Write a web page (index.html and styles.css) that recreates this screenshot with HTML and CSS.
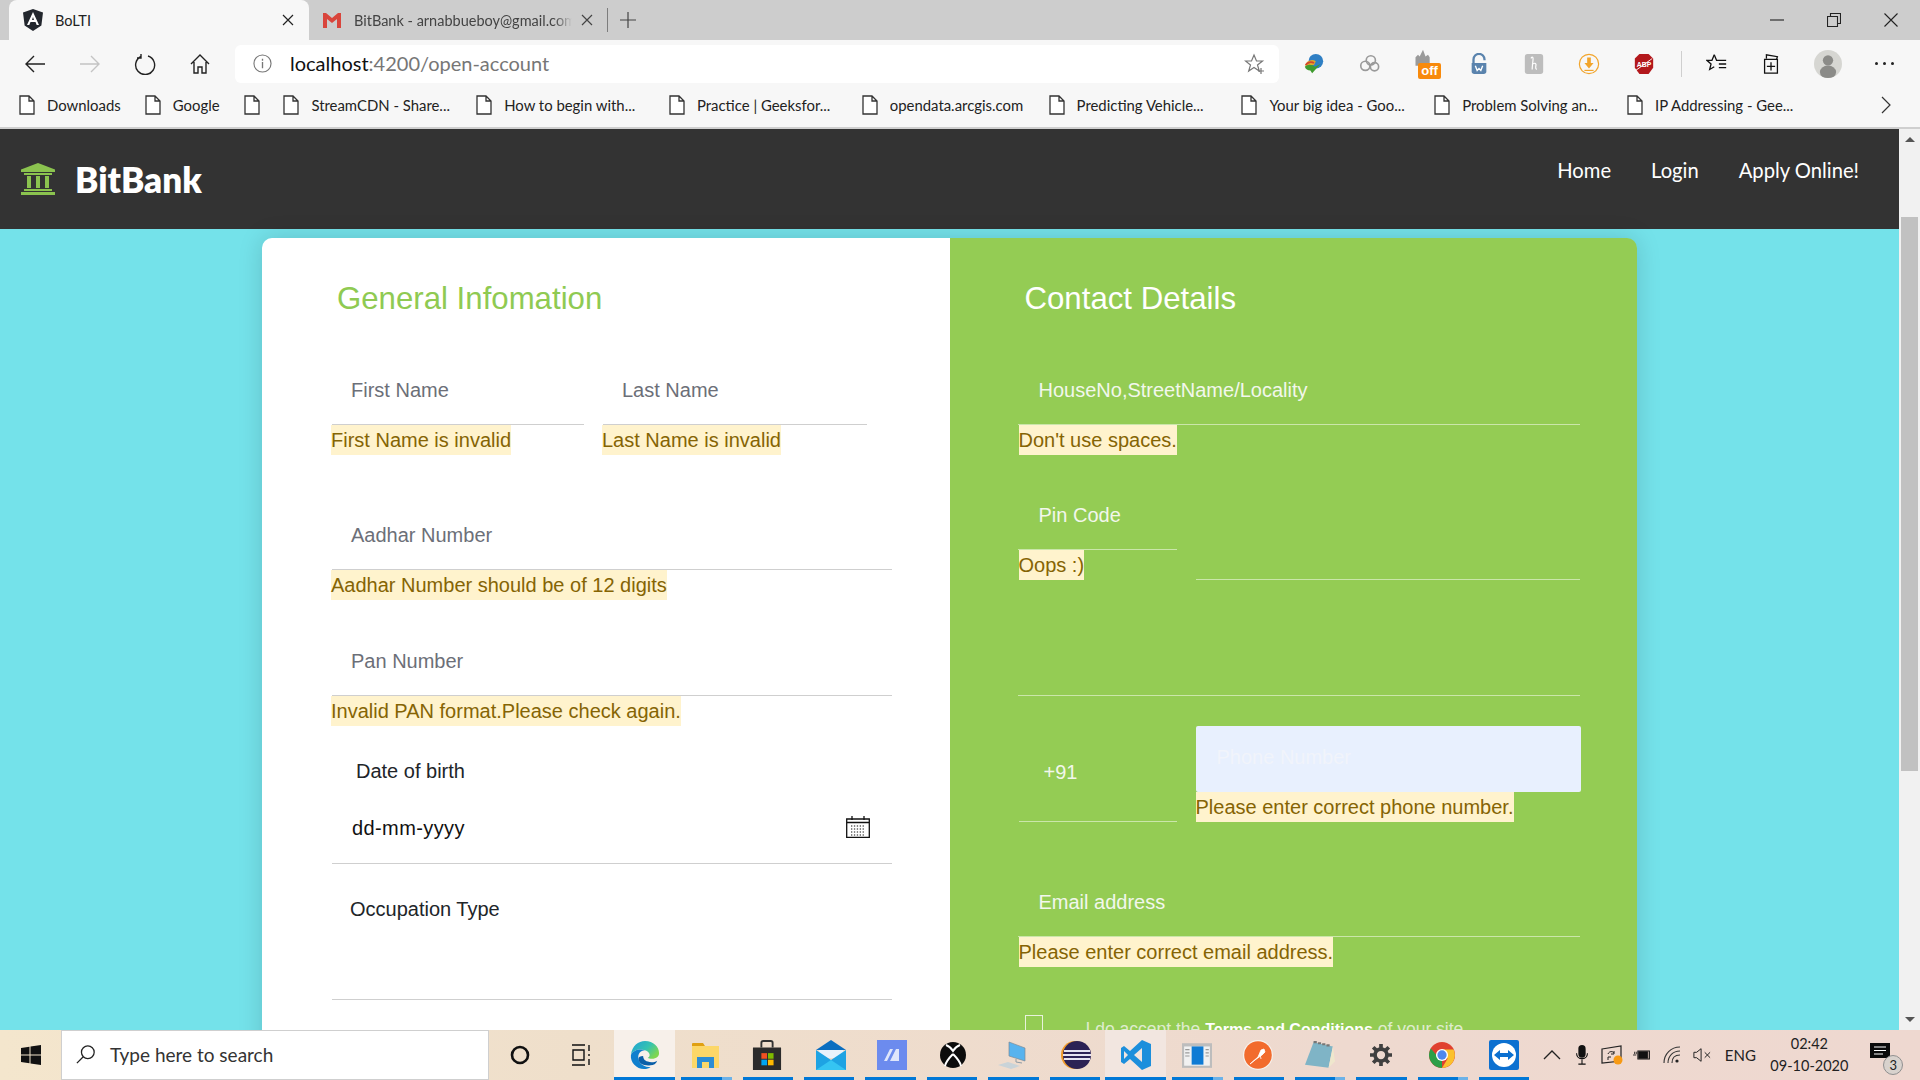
FILE: index.html
```html
<!DOCTYPE html>
<html lang="en">
<head>
<meta charset="utf-8">
<title>BoLTI</title>
<link rel="stylesheet" href="styles.css">
</head>
<body>
<svg class="defs" width="0" height="0" aria-hidden="true">
  <symbol id="doc" viewBox="0 0 16 20"><path d="M1 1h9l5 5v13H1z M10 1v5h5" fill="#fff" stroke="#333" stroke-width="1.3"/></symbol>
  <symbol id="close" viewBox="0 0 12 12"><path d="M1 1l10 10M11 1L1 11" fill="none" stroke="currentColor" stroke-width="1.2"/></symbol>
</svg>
<div class="window">
  <div class="tabstrip">
    <div class="tab tab-active">
      <svg class="tab-icon" viewBox="0 0 20 22"><path d="M10 0l10 3.500-1.600 13L10 22l-8.400-5.500L0 3.500z" fill="#23272e"/><path d="M10 3l-6 13h2.300l1.200-3h5l1.200 3h2.300zM9 11l1-3 1 3z" fill="#fff"/></svg>
      <span class="tab-title">BoLTI</span>
      <svg class="tab-x" viewBox="0 0 12 12"><use href="#close"/></svg>
    </div>
    <div class="tab tab-idle">
      <svg class="tab-icon" viewBox="0 0 20 16"><path d="M1 1h3l6 5 6-5h3v15h-4V7l-5 4-5-4v9H1z" fill="#d9453c"/></svg>
      <span class="tab-title tab-clip">BitBank - arnabbueboy@gmail.com</span>
      <svg class="tab-x" viewBox="0 0 12 12"><use href="#close"/></svg>
    </div>
    <div class="tab-sep"></div>
    <svg class="tab-plus" viewBox="0 0 16 16"><path d="M8 0v16M0 8h16" stroke="#444" stroke-width="1.2"/></svg>
    <div class="win-controls">
      <svg viewBox="0 0 14 14"><path d="M0 7h14" stroke="#222" stroke-width="1.1"/></svg>
      <svg viewBox="0 0 14 14"><path d="M.5 3.500h10v10H.5zM3.500 3.500V.5h10v10h-3" fill="none" stroke="#222" stroke-width="1.1"/></svg>
      <svg viewBox="0 0 14 14"><path d="M.5.5l13 13M13.500.5l-13 13" stroke="#222" stroke-width="1.1"/></svg>
    </div>
  </div>

  <div class="toolbar">
    <div class="tool-btn"><svg viewBox="0 0 22 22"><path d="M21 11H2M10 3l-8 8 8 8" fill="none" stroke="#222" stroke-width="1.400"/></svg></div>
    <div class="tool-btn"><svg viewBox="0 0 22 22"><path d="M1 11h19M12 3l8 8-8 8" fill="none" stroke="#c4c4c4" stroke-width="1.400"/></svg></div>
    <div class="tool-btn"><svg viewBox="0 0 22 22"><path d="M7 3.500A9.500 9.500 0 1 0 14 3M7 1v4H3" fill="none" stroke="#222" stroke-width="1.400"/></svg></div>
    <div class="tool-btn"><svg viewBox="0 0 22 22"><path d="M2 11l9-9 9 9M5 9v11h4v-6h4v6h4V9" fill="none" stroke="#222" stroke-width="1.400"/></svg></div>
    <div class="address">
      <svg class="info" viewBox="0 0 20 20"><circle cx="10" cy="10" r="9" fill="none" stroke="#777" stroke-width="1.200"/><path d="M10 8.500V15M10 5v2" stroke="#777" stroke-width="1.400"/></svg>
      <span class="url"><span class="url-host">localhost</span>:4200/open-account</span>
      <svg class="fav" viewBox="0 0 22 22"><path d="M10 2l2.500 6h6l-5 4 1.800 6-5.300-3.500L4.700 18l1.800-6-5-4h6z" fill="none" stroke="#777" stroke-width="1.200"/><path d="M17 15v6M14 18h6" stroke="#777" stroke-width="1.200"/></svg>
    </div>
    <div class="ext-row">
      <svg viewBox="0 0 24 24"><circle cx="14" cy="9" r="8" fill="#2f7fc4"/><path d="M2 14c2-6 8-8 12-5l-2 4z" fill="#e0a92a"/><path d="M2 15c2-3 8-3 11 0l6-3-9 10-2-3c-3 0-5-1-6-4z" fill="#3f9b2f"/><path d="M3 13c2-3 6-4 9-2" stroke="#d2452e" stroke-width="2" fill="none"/></svg>
      <svg viewBox="0 0 24 24" fill="none" stroke="#9a9a9a" stroke-width="1.800"><circle cx="8" cy="14" r="5"/><circle cx="14" cy="8" r="5"/><circle cx="18" cy="15" r="4.500"/></svg>
      <div class="ext-off">
        <svg viewBox="0 0 24 24"><path d="M3 20V10l3-3 2 2 4-8 3 8 3-2 2 3v10z" fill="#9a9a9a"/></svg>
        <span class="off-badge">off</span>
      </div>
      <svg viewBox="0 0 24 24"><path d="M6 11V7a6 6 0 0 1 12 0v1" fill="none" stroke="#5a83ad" stroke-width="2.500"/><path d="M4 11h16v9a3 3 0 0 1-3 3H7a3 3 0 0 1-3-3z" fill="#5a83ad"/><path d="M8 14l2 5 2-2 2 2 2-5" stroke="#fff" stroke-width="1.500" fill="none"/></svg>
      <svg viewBox="0 0 24 24"><rect x="2" y="1" width="20" height="22" rx="3" fill="#bdbdbd"/><path d="M9 6c0-2 2-2 2 0 0 3-1 8-1 12M10 13c2-3 5-2 4 1 0 2-1 3 1 4" fill="none" stroke="#fff" stroke-width="1.300"/></svg>
      <svg viewBox="0 0 24 24"><circle cx="12" cy="12" r="10.500" fill="none" stroke="#f2a52c" stroke-width="1.300"/><path d="M10 5h4v6h3l-5 6-5-6h3z" fill="#f2a52c"/><path d="M7 19h10" stroke="#f2a52c" stroke-width="1.300"/></svg>
      <svg viewBox="0 0 24 24"><path d="M7 1h10l5 5v10l-5 7H7l-5-7V6z" fill="#b3181c"/><text x="12" y="15" class="abp">ABP</text><path d="M3 19L21 6" stroke="#fff" stroke-width="1"/></svg>
      <div class="tool-sep"></div>
      <div class="tool-right">
        <svg viewBox="0 0 24 24"><path d="M9 2L6.500 8H1l4.500 4L4 18l5-3" fill="none" stroke="#111" stroke-width="1.400"/><path d="M9 2l2.500 6H22M14 12h8M14 16h8" fill="none" stroke="#111" stroke-width="1.400"/></svg>
        <svg viewBox="0 0 24 24"><path d="M7 6V2l12 2-1 3M5 7h14v15H5z" fill="none" stroke="#111" stroke-width="1.400"/><path d="M12 10v9M7.500 14.500h9" stroke="#111" stroke-width="1.400"/></svg>
        <div class="avatar"><svg viewBox="0 0 28 38"><ellipse cx="14" cy="30" rx="11" ry="9" fill="#8b8b88"/><circle cx="14" cy="14" r="7" fill="#8b8b88"/></svg></div>
        <div class="more"><i></i><i></i><i></i></div>
      </div>
    </div>
  </div>

  <div class="bookmarks">
    <a class="bm"><svg><use href="#doc"/></svg><span class="bm-text w-downloads">Downloads</span></a>
    <a class="bm"><svg><use href="#doc"/></svg><span class="bm-text w-google">Google</span></a>
    <a class="bm"><svg><use href="#doc"/></svg></a>
    <a class="bm"><svg><use href="#doc"/></svg><span class="bm-text">StreamCDN - Share...</span></a>
    <a class="bm"><svg><use href="#doc"/></svg><span class="bm-text">How to begin with...</span></a>
    <a class="bm"><svg><use href="#doc"/></svg><span class="bm-text">Practice | Geeksfor...</span></a>
    <a class="bm"><svg><use href="#doc"/></svg><span class="bm-text w-open">opendata.arcgis.com</span></a>
    <a class="bm"><svg><use href="#doc"/></svg><span class="bm-text">Predicting Vehicle...</span></a>
    <a class="bm"><svg><use href="#doc"/></svg><span class="bm-text">Your big idea - Goo...</span></a>
    <a class="bm"><svg><use href="#doc"/></svg><span class="bm-text">Problem Solving an...</span></a>
    <a class="bm"><svg><use href="#doc"/></svg><span class="bm-text">IP Addressing - Gee...</span></a>
    <svg class="bm-more" viewBox="0 0 10 18"><path d="M1 1l8 8-8 8" fill="none" stroke="#333" stroke-width="1.200"/></svg>
  </div>

  <div class="viewport">
    <div class="page">
      <nav class="navbar">
        <div class="brand">
          <svg class="brand-icon" viewBox="0 0 34 32"><path d="M17 0l17 6.500V9H0V6.500z" fill="#8bc34f"/><path d="M3 10h28v2H3zM6 13h4v12H6zM15 13h4v12h-4zM24 13h4v12h-4zM3 26h28v2H3zM0 29h34v3H0z" fill="#8bc34f"/></svg>
          <span class="brand-name">BitBank</span>
        </div>
        <div class="nav-links">
          <a>Home</a>
          <a>Login</a>
          <a>Apply Online!</a>
        </div>
      </nav>

      <main class="card">
        <section class="pane pane-left">
          <h2 class="pane-title">General Infomation</h2>
          <div class="split">
            <div class="col-first">
              <div class="field">First Name</div>
              <span class="err">First Name is invalid</span>
            </div>
            <div class="col-last">
              <div class="field">Last Name</div>
              <span class="err">Last Name is invalid</span>
            </div>
          </div>
          <div class="group gap-aadhar">
            <div class="field">Aadhar Number</div>
            <span class="err">Aadhar Number should be of 12 digits</span>
          </div>
          <div class="group gap-pan">
            <div class="field">Pan Number</div>
            <span class="err">Invalid PAN format.Please check again.</span>
          </div>
          <label class="dob-label">Date of birth</label>
          <div class="field field-date">
            <span class="date-value">dd-mm-yyyy</span>
            <svg class="cal" viewBox="0 0 24 22"><path d="M.7 3h22.600v18.300H.7z" fill="#fff" stroke="#111" stroke-width="1.300"/><path d="M1 6.500h22M6 0v4M18 0v4" stroke="#111" stroke-width="1.300"/><path d="M5 10h14M5 13h14M5 16h14M5 19h14" stroke="#111" stroke-width="1.200" stroke-dasharray="1.300 1.600"/></svg>
          </div>
          <div class="field field-occupation">Occupation Type</div>
        </section>

        <section class="pane pane-right">
          <h2 class="pane-title">Contact Details</h2>
          <div class="group">
            <div class="field">HouseNo,StreetName/Locality</div>
            <span class="err">Don't use spaces.</span>
          </div>
          <div class="row-pin">
            <div class="col-short">
              <div class="field">Pin Code</div>
              <span class="err">Oops :)</span>
            </div>
            <div class="col-wide"><div class="field field-tall"></div></div>
          </div>
          <div class="field field-blank"></div>
          <div class="row-phone">
            <div class="col-short"><div class="field field-code">+91</div></div>
            <div class="col-wide">
              <div class="phone-input">Phone Number</div>
              <span class="err err-phone">Please enter correct phone number.</span>
            </div>
          </div>
          <div class="group gap-email">
            <div class="field">Email address</div>
            <span class="err">Please enter correct email address.</span>
          </div>
          <div class="terms">
            <span class="check"></span>
            <span class="terms-text">I do accept the <b>Terms and Conditions</b> of your site</span>
          </div>
        </section>
      </main>
    </div>
    <div class="scrollbar">
      <span class="arrow-up"></span>
      <div class="thumb"></div>
      <span class="arrow-down"></span>
    </div>
  </div>

  <footer class="taskbar">
    <div class="start"><svg viewBox="0 0 20 20"><path d="M0 3l8.500-1.300v7.800H0zM9.500 1.500L20 0v9.500H9.500zM0 10.500h8.500v7.800L0 17zM9.500 10.500H20V20L9.500 18.500z" fill="#111"/></svg></div>
    <div class="search">
      <svg viewBox="0 0 22 22"><circle cx="13" cy="9" r="7" fill="none" stroke="#222" stroke-width="1.400"/><path d="M8 14l-7 7" stroke="#222" stroke-width="1.400"/></svg>
      <span>Type here to search</span>
    </div>
    <div class="sys-btn"><svg viewBox="0 0 20 20"><circle cx="10" cy="10" r="8" fill="none" stroke="#111" stroke-width="2.600"/></svg></div>
    <div class="sys-btn"><svg viewBox="0 0 20 22"><path d="M1 1h13M1 21h13M2 6h11v10H2zM18 1v6M18 10v2M18 15v6" fill="none" stroke="#111" stroke-width="1.400"/></svg></div>
    <div class="apps">
      <div class="app app-active">
        <svg viewBox="0 0 32 32"><defs><linearGradient id="eg" x1="0" y1="0" x2="1" y2=".6"><stop offset="0" stop-color="#1f9fd8"/><stop offset=".6" stop-color="#35c3b0"/><stop offset="1" stop-color="#7fd650"/></linearGradient></defs><path d="M1 16C2 6 9 1 16 1c9 0 15 6 15 13 0 5-5 6-9 6-2 0-3-1-3-1 3-1 3-6-3-8C10 9 3 11 1 16z" fill="url(#eg)"/><path d="M1 16c2-5 9-7 15-5-5 0-8 4-7 9 1 6 7 9 13 9-2 1-4 2-7 2C7 31 0 24 1 16z" fill="#0f7fce"/><path d="M9 20c0 5 6 8 13 7 3 0 6-2 7-5-3 2-7 2-10 1-4-1-5-4-5-6-3 0-5 1-5 3z" fill="#0b5fa8"/></svg>
      </div>
      <div class="app app-stack">
        <svg viewBox="0 0 28 30"><path d="M0 4a1 1 0 0 1 1-1h10l2 3H0z" fill="#e0a012"/><path d="M0 6h27v22H0z" fill="#fcd768"/><path d="M5 28V17h17v11h-5v-6h-7v6z" fill="#2c8dd4"/></svg>
      </div>
      <div class="app app-run">
        <svg viewBox="0 0 30 32"><path d="M9 8V3a2 2 0 0 1 2-2h8a2 2 0 0 1 2 2v5" fill="none" stroke="#333" stroke-width="2"/><path d="M0 8h30v24H0z" fill="#2b2b2b"/><path d="M9 14h6v6H9z" fill="#f25022"/><path d="M16 14h6v6h-6z" fill="#7fba00"/><path d="M9 21h6v6H9z" fill="#00a4ef"/><path d="M16 21h6v6h-6z" fill="#ffb900"/></svg>
      </div>
      <div class="app app-run app-nudge">
        <svg viewBox="0 0 30 30"><path d="M0 10L15 0l15 10z" fill="#0a6ec0"/><path d="M3 10h24v8H3z" fill="#e8f2fb"/><path d="M0 10l15 10 15-10v20H0z" fill="#1ea3e3"/><path d="M0 30l15-10 15 10z" fill="#35c4f2"/></svg>
      </div>
      <div class="app app-run app-nudge">
        <svg viewBox="0 0 30 30"><path d="M0 0h30v30H0z" fill="#6c8bee"/><path d="M13 9l-6 12h3l6-12zM19 9l-6 12h9V9z" fill="#dfe6fb"/></svg>
      </div>
      <div class="app app-run app-mid app-nudge">
        <svg viewBox="0 0 26 26"><circle cx="13" cy="13" r="13" fill="#0c0c0c"/><path d="M6 3c3 1 5 3 7 6 2-3 4-5 7-6M13 12c-3 3-7 7-8 12M13 12c3 3 7 7 8 12" stroke="#fff" stroke-width="2" fill="none"/></svg>
      </div>
      <div class="app app-run">
        <svg viewBox="0 0 30 30"><path d="M11 2l16 6v13L11 16z" fill="#58b3ee" stroke="#7c8a96" stroke-width=".7"/><path d="M18 19v3l6 1" fill="none" stroke="#8c9aa4"/><path d="M0 25l10-3 12 4-9 3z" fill="#c9d3d8"/></svg>
      </div>
      <div class="app app-run app-nudge">
        <svg viewBox="0 0 30 30"><circle cx="14" cy="15" r="14" fill="#f19a28"/><circle cx="16" cy="15" r="14" fill="#2c2255"/><path d="M3 11h26M2 15h28M3 19h26" stroke="#e6e4f0" stroke-width="2"/></svg>
      </div>
      <div class="app app-hi">
        <svg viewBox="0 0 30 30"><path d="M21 0l9 4v22l-9 4-12-11-6 5-3-2v-14l3-2 6 5z" fill="#1c8fdc"/><path d="M21 8l-8 7 8 7z" fill="#f2e6e0"/><path d="M3 11l4 4-4 4z" fill="#f2e6e0"/></svg>
      </div>
      <div class="app app-stack">
        <svg viewBox="0 0 28 24"><path d="M0 1h28v23H0z" fill="#bdbdbd"/><path d="M2 4h24v18H2z" fill="#f1f1f1"/><path d="M9 4h11v17H9z" fill="#0f7bd4"/><path d="M3 7h4M3 10h4M3 13h4M22 7h3M22 10h3M22 13h3" stroke="#999"/></svg>
      </div>
      <div class="app app-run">
        <svg viewBox="0 0 30 30"><circle cx="15" cy="15" r="15" fill="#f7f1ec"/><circle cx="15" cy="15" r="13.800" fill="#f26b2d"/><path d="M7 24l8-7 3-7 3-1 1 3-3 3-7 5zM17 14l1 5" stroke="#fff" fill="#fff" stroke-width=".8"/></svg>
      </div>
      <div class="app app-stack">
        <svg viewBox="0 0 28 28"><path d="M8 2l18 4-4 20-22-3z" fill="#7fb4c6"/><path d="M26 6l2 14-6 6z" fill="#efe7cd"/><path d="M8 2h3M12 3h3M16 4h3M20 5h3" stroke="#777" stroke-width="2"/></svg>
      </div>
      <div class="app app-run app-small">
        <svg viewBox="0 0 24 24"><circle cx="12" cy="12" r="6.500" fill="none" stroke="#3f3f3f" stroke-width="4"/><path d="M12 0v5M12 19v5M0 12h5M19 12h5M3.500 3.500L7 7M17 17l3.500 3.500M20.500 3.500L17 7M7 17l-3.500 3.500" stroke="#3f3f3f" stroke-width="4"/></svg>
      </div>
      <div class="app app-stack app-mid">
        <svg viewBox="0 0 28 28"><circle cx="14" cy="14" r="14" fill="#e0402f"/><path d="M14 14L2 21A14 14 0 0 0 14 28z M14 14l-12 7A14 14 0 0 1 2 7l6 7z" fill="#2c9f48"/><path d="M14 8h12.500A14 14 0 0 1 14 28l6-10z" fill="#fbc12d"/><circle cx="14" cy="14" r="6.500" fill="#fff"/><circle cx="14" cy="14" r="5" fill="#4f88ee"/></svg>
      </div>
      <div class="app app-run">
        <svg viewBox="0 0 30 30"><rect width="30" height="30" rx="2" fill="#0c70d0"/><circle cx="15" cy="15" r="12" fill="#fff"/><path d="M5 15l6-5v3h8v-3l6 5-6 5v-3h-8v3z" fill="#0c70d0"/></svg>
      </div>
    </div>
    <div class="tray">
      <div class="tray-item"><svg viewBox="0 0 18 10"><path d="M1 9l8-8 8 8" fill="none" stroke="#222" stroke-width="1.300"/></svg></div>
      <div class="tray-item"><svg viewBox="0 0 14 22"><rect x="3" y="0" width="8" height="14" rx="4" fill="#111"/><path d="M1 9c0 8 12 8 12 0M7 16v5M3 21h8" fill="none" stroke="#111" stroke-width="1.200"/></svg></div>
      <div class="tray-item tray-sync"><svg viewBox="0 0 22 20"><path d="M1 4l19-3v15l-19 2z" fill="none" stroke="#222" stroke-width="1.200"/><path d="M7 9c1-3 5-3 6-1M13 6v3h-3M7 15V12h3" fill="none" stroke="#222"/><circle cx="17" cy="15" r="4.500" fill="#f79a14"/></svg></div>
      <div class="tray-item"><svg viewBox="0 0 22 14"><path d="M6 2h14v10H6z" fill="none" stroke="#111" stroke-width="1.300"/><path d="M7 3h11v8H7zM0 7h4M2 3v3M4 3v3" fill="#111" stroke="#111"/></svg></div>
      <div class="tray-item"><svg viewBox="0 0 18 18"><path d="M1 17C1 8 8 1 17 1M5 17C5 10 10 5 17 5M9 17c0-5 3-8 8-8" fill="none" stroke="#333" stroke-width="1.100"/><circle cx="14" cy="15" r="1.600" fill="#222"/></svg></div>
      <div class="tray-item"><svg viewBox="0 0 20 16"><path d="M1 5h3l5-4v14l-5-4H1zM13 5l6 6M19 5l-6 6" fill="none" stroke="#222" stroke-width="1.100"/></svg></div>
      <div class="tray-lang">ENG</div>
      <div class="clock"><span>02:42</span><span>09-10-2020</span></div>
      <div class="notif">
        <svg viewBox="0 0 20 18"><path d="M0 0h20v15H0z" fill="#0b0b0b"/><path d="M4 4h12M4 7.500h12M4 11h9" stroke="#fff"/></svg>
        <span class="notif-count">3</span>
      </div>
    </div>
  </footer>
</div>
</body>
</html>
```
FILE: styles.css
```css
* { box-sizing: border-box; }
html, body { margin: 0; height: 100%; overflow: hidden; }
body { font-family: "Liberation Sans", Arial, sans-serif; }
.defs { position: absolute; }
.window { width: 1920px; height: 1080px; display: flex; flex-direction: column; }

/* tabs */
.tabstrip { height: 40px; flex: none; background: #cdcdcd; display: flex; align-items: center; padding-left: 9px; font-family: Lato, "Noto Sans", sans-serif; font-size: 14.5px; color: #222; }
.tab { height: 40px; width: 300px; display: flex; align-items: center; position: relative; }
.tab-active { background: #f7f7f7; border-radius: 8px 8px 0 0; padding-left: 14px; }
.tab-idle { width: 294px; padding-left: 13px; color: #444; }
.tab-icon { width: 20px; height: 22px; flex: none; }
.tab-title { margin-left: 12px; width: 218px; white-space: nowrap; overflow: hidden; }
.tab-clip { -webkit-mask-image: linear-gradient(90deg, #000 92%, transparent); mask-image: linear-gradient(90deg, #000 92%, transparent); }
.tab-x { width: 12px; height: 12px; margin-left: auto; margin-right: 15px; }
.tab-idle .tab-x { margin-right: 10px; }
.tab-sep { width: 1px; height: 24px; background: #7d7d7d; margin-left: 4px; }
.tab-plus { width: 16px; height: 16px; margin-left: 12px; }
.win-controls { margin-left: auto; display: flex; gap: 43px; padding-right: 22px; }
.win-controls svg { width: 14px; height: 14px; display: block; }

/* toolbar */
.toolbar { height: 47px; flex: none; background: #f7f7f7; display: flex; align-items: center; padding-left: 7px; }
.tool-btn { width: 55px; height: 38px; display: flex; align-items: center; justify-content: center; }
.tool-btn svg { width: 22px; height: 22px; }
.address { margin-left: 8px; width: 1044px; height: 38px; background: #fff; border-radius: 6px; display: flex; align-items: center; padding: 0 13px 0 18px; }
.info { width: 19px; height: 19px; }
.url { margin-left: 18px; padding-bottom: 2px; font-family: Lato, "Noto Sans", sans-serif; font-size: 20px; color: #767676; }
.url-host { color: #111; }
.fav { margin-left: auto; width: 22px; height: 22px; }
.ext-row { display: flex; align-items: center; margin-left: 24px; }
.ext-row > svg { width: 22px; height: 22px; margin-right: 33px; flex: none; }
.ext-off { position: relative; width: 24px; height: 30px; margin-right: 31px; flex: none; }
.ext-off svg { width: 20px; height: 20px; position: absolute; left: 0; top: 0; }
.off-badge { position: absolute; left: 5px; top: 14px; width: 23px; height: 16px; background: #f88a0c; border-radius: 2px; color: #fff; font: bold 13px/16px "Liberation Sans", sans-serif; text-align: center; }
.abp { font: bold 7.500px "Liberation Sans", sans-serif; fill: #fff; text-anchor: middle; }
.tool-sep { width: 1px; height: 26px; background: #cfcfcf; margin-left: -7px; }
.tool-right { display: flex; align-items: center; margin-left: 24px; }
.tool-right > svg { width: 22px; height: 22px; margin-right: 32px; }
.avatar { width: 28px; height: 28px; border-radius: 50%; background: #d6d6d2; overflow: hidden; margin-right: 33px; }
.avatar svg { width: 28px; height: 28px; display: block; }
.more { display: flex; gap: 5px; }
.more i { width: 3px; height: 3px; border-radius: 50%; background: #222; }

/* bookmarks */
.bookmarks { height: 42px; flex: none; background: #f7f7f7; border-bottom: 2px solid #cfcfcf; display: flex; align-items: center; padding-left: 19px; padding-bottom: 5px; font-family: Lato, "Noto Sans", sans-serif; font-size: 14.900px; color: #222; }
.bm { display: flex; align-items: center; margin-right: 23.800px; flex: none; }
.bm svg { width: 16px; height: 20px; }
.bm-text { width: 141px; margin-left: 12px; white-space: nowrap; overflow: hidden; }
.w-downloads { width: 74px; }
.w-google { width: 47px; }
.w-open { width: 135px; }
.bm-more { width: 10px; height: 18px; margin-left: auto; margin-right: 29px; }

/* page */
.viewport { flex: 1; min-height: 0; display: flex; background: #74e2ea; overflow: hidden; }
.page { flex: 1; min-width: 0; }
.navbar { height: 100px; background: #333; display: flex; justify-content: space-between; padding: 34px 40px 0 21px; }
.brand { display: flex; align-items: flex-start; height: 32px; }
.brand-icon { width: 34px; height: 32px; }
.brand-name { margin-left: 20px; font: 800 35px/32px Lato, "Noto Sans", sans-serif; color: #fff; }
.nav-links { display: flex; gap: 40px; font: 20.200px/24px Lato, "Noto Sans", sans-serif; color: #fff; margin-top: -5px; }

.card { width: 1375px; margin: 9px auto 0; display: flex; border-radius: 10px; box-shadow: 0 0 24px rgba(0, 0, 0, .15); font-size: 20px; }
.pane { width: 50%; padding-top: 40px; padding-bottom: 120px; }
.pane-left { background: #fff; padding-left: 70px; padding-right: 58px; border-radius: 10px 0 0 10px; color: #6c6f78; }
.pane-right { background: #94cc54; padding-left: 68px; padding-right: 57px; border-radius: 0 10px 10px 0; color: #f2f7ec; }
.pane-title { margin: 0 0 34px 5px; font-size: 31.200px; font-weight: 400; line-height: 42px; color: #8fca52; }
.pane-right .pane-title { color: #fff; margin-left: 7px; }

.field { height: 71px; padding: 2px 0 0 19px; display: flex; align-items: center; border-bottom: 1px solid #cfcfcf; }
.pane-right .field { border-bottom-color: rgba(255, 255, 255, .5); padding-left: 21px; }
.err { display: inline-block; height: 30px; line-height: 30px; background: #fff3cd; color: #856404; margin-left: -1px; }
.pane-right .err { margin-left: 1px; }
.split { display: flex; }
.col-first { width: 252px; margin-right: 19px; }
.col-last { width: 264px; }
.group { display: block; }
.gap-aadhar { margin-top: 44px; }
.gap-pan { margin-top: 25px; }
.dob-label { display: block; margin: 30px 0 7px 24px; line-height: 30px; color: #212529; }
.field-date { color: #111; justify-content: space-between; padding: 0 22px 0 20px; }
.date-value { letter-spacing: .4px; }
.cal { width: 24px; height: 22px; margin-bottom: 2px; }
.field-occupation { height: 136px; align-items: flex-start; padding: 30px 0 0 18px; line-height: 30px; color: #212529; }

.row-pin { display: flex; margin-top: 24px; height: 101px; }
.col-short { width: 159px; flex: none; margin-right: 19px; }
.col-wide { flex: 1; }
.pane-right .field-tall { height: 101px; }
.pane-right .field-blank { height: 116px; padding: 0; }
.row-phone { display: flex; margin-top: 30px; height: 96px; }
.pane-right .field-code { height: 96px; padding: 0 0 2px 25px; margin-left: 1px; }
.phone-input { width: 385px; height: 66px; background: #e8f0fe; border-radius: 2px; padding-left: 21px; line-height: 62px; color: #f1f4fb; }
.pane-right .err-phone { display: block; width: 318px; margin-left: 0; }
.gap-email { margin-top: 44px; }
.terms { margin-top: 48px; display: flex; align-items: flex-start; margin-left: 7px; }
.check { width: 18px; height: 24px; border: 1px solid #e8f2dc; flex: none; }
.terms-text { margin-left: 43px; margin-top: 2px; font-size: 17.500px; line-height: 24px; color: #dfeccf; white-space: nowrap; }
.terms-text b { color: #fff; font-size: 16px; }

.scrollbar { width: 21px; flex: none; background: #f1f1f1; display: flex; flex-direction: column; align-items: center; padding-top: 8px; position: relative; }
.arrow-up { width: 0; height: 0; border: 5px solid transparent; border-top: 0; border-bottom: 5px solid #555; }
.thumb { width: 17px; height: 554px; background: #c1c1c1; margin-top: 75px; }
.arrow-down { width: 0; height: 0; margin-top: auto; margin-bottom: 8px; border: 5px solid transparent; border-bottom: 0; border-top: 5px solid #555; }

/* taskbar */
.taskbar { height: 50px; flex: none; background: linear-gradient(90deg, #f4e6cd 0, #efdfcb 30%, #eed9cf 70%, #eed8d0 100%); display: flex; align-items: stretch; position: relative; font-family: Lato, "Noto Sans", sans-serif; color: #222; }
.start { width: 61px; display: flex; align-items: center; justify-content: center; }
.start svg { width: 20px; height: 20px; }
.search { width: 428px; background: #fff; border: 1px solid #cfcfcf; display: flex; align-items: center; padding: 0 0 2px 14px; font-size: 19px; color: #333; }
.search svg { width: 20px; height: 20px; }
.search span { margin-left: 14px; }
.sys-btn { width: 61.500px; display: flex; align-items: center; justify-content: center; }
.sys-btn svg { width: 20px; height: 22px; }
.apps { display: flex; margin-left: 2px; }
.app { width: 61.360px; position: relative; display: flex; align-items: center; justify-content: center; }
.app svg { width: 30px; height: 30px; }
.app-nudge svg { margin-left: 4px; }
.app-mid svg { width: 26px; height: 26px; }
.app-small svg { width: 22px; height: 22px; }
.app::after { content: ""; position: absolute; bottom: 0; height: 3px; left: 6px; right: 5px; }
.app-run::after { background: #0078d7; }
.app-stack::after { background: linear-gradient(90deg, #0078d7 80%, #6cb2e8 80%); }
.app-active { background: #f7f0ea; }
.app-hi { background: #f2e6e0; }
.app-active::after, .app-hi::after { background: #0078d7; left: 0; right: 0; }
.tray { display: flex; align-items: stretch; margin-left: 3px; }
.tray-item { width: 30px; display: flex; align-items: center; justify-content: center; }
.tray-item svg { width: 18px; height: 20px; }
.tray-sync svg { width: 22px; height: 20px; }
.tray-lang { width: 46px; display: flex; align-items: center; justify-content: center; font-size: 15px; }
.clock { width: 92px; display: flex; flex-direction: column; align-items: center; justify-content: center; font-size: 14.500px; line-height: 22px; }
.notif { width: 52px; position: relative; display: flex; align-items: center; justify-content: center; }
.notif svg { width: 20px; height: 18px; margin-bottom: 6px; margin-right: 3px; }
.notif-count { position: absolute; left: 28px; top: 25px; width: 20px; height: 20px; border-radius: 50%; background: #d8d2cd; border: 1px solid #8f8f8f; font-size: 13px; line-height: 18px; text-align: center; }
```
